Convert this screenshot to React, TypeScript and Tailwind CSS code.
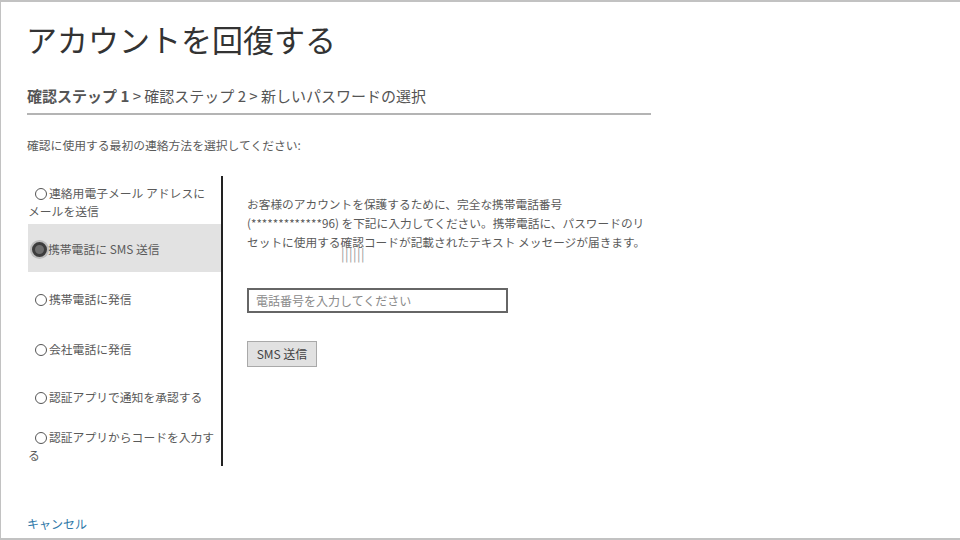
import React from "react";

type Option = {
  lines: string[];
  selected?: boolean;
  cls: string;
};

const options: Option[] = [
  { lines: ["連絡用電子メール アドレスに", "メールを送信"], cls: "pt-[8px] pb-[4px]" },
  { lines: ["携帯電話に SMS 送信"], selected: true, cls: "h-[48px] pt-[15px]" },
  { lines: ["携帯電話に発信"], cls: "pt-[18px] pb-[14px]" },
  { lines: ["会社電話に発信"], cls: "pt-[18px] pb-[12px]" },
  { lines: ["認証アプリで通知を承認する"], cls: "pt-[18px] pb-[4px]" },
  { lines: ["認証アプリからコードを入力す", "る"], cls: "pt-[18px] pb-[2px]" },
];

function Radio({ selected }: { selected?: boolean }) {
  if (selected) {
    return (
      <span className="mr-[1px] inline-block h-[15px] w-[15px] translate-y-[3px] rounded-full border-[3px] border-[#3d3d3d] bg-[#6e6e6e] shadow-[0_0_0_2px_#bdbdbd]" />
    );
  }
  return (
    <span className="ml-[7px] mr-[2px] inline-block h-[12px] w-[12px] translate-y-[2px] rounded-full border border-[#555] bg-white" />
  );
}

export default function App() {
  return (
    <div className="h-[540px] w-[960px] overflow-hidden border-t-2 border-b-2 border-l border-[#c2c2c2] bg-white font-['Noto_Sans_CJK_JP',sans-serif] text-[#5a5a5a]">
      <div className="pl-[26px] pt-[17px]">
        <h1 className="-ml-[1px] text-[31px] font-normal leading-[40px] text-[#333]">アカウントを回復する</h1>

        <div className="mt-[26px] text-[15px] leading-[22px] text-[#555]">
          <span className="font-bold">確認ステップ 1</span> &gt; 確認ステップ 2 &gt; 新しいパスワードの選択
        </div>
        <div className="mt-[6px] h-[2px] w-[624px] bg-[#b4b4b4]" />

        <p className="mt-[21px] text-[11.8px] leading-[18px]">確認に使用する最初の連絡方法を選択してください:</p>

        <div className="mt-[22px] flex">
          <div className="w-[196px] border-r-2 border-[#222] pl-[1px]">
            {options.map((o) => (
              <div
                key={o.lines[0]}
                className={`${o.cls} whitespace-nowrap text-[11.8px] leading-[18px] ${o.selected ? "bg-[#e2e2e2] pl-[4px]" : ""}`}
              >
                <Radio selected={o.selected} />
                {o.lines[0]}
                {o.lines[1] && <span className="block">{o.lines[1]}</span>}
              </div>
            ))}
          </div>

          <div className="pl-[24px] pt-[18px]">
            <p className="whitespace-nowrap text-[11.7px] leading-[19px]">
              <span className="block">お客様のアカウントを保護するために、完全な携帯電話番号</span>
              <span className="block">(*************96) を下記に入力してください。携帯電話に、パスワードのリ</span>
              <span className="block">セットに使用する確認コードが記載されたテキスト メッセージが届きます。</span>
            </p>
            <div className="-mt-[4px] ml-[94px] h-[14px] text-[13px] leading-[14px] tracking-[0.5px] text-[#999]">||||||</div>

            <input
              type="text"
              placeholder="電話番号を入力してください"
              className="mt-[27px] block h-[25px] w-[261px] border-2 border-[#666] px-[7px] text-[12px] text-[#333] outline-none placeholder:text-[#8a8a8a]"
            />

            <button className="mt-[28px] block h-[26px] w-[70px] whitespace-nowrap border border-[#a9a9a9] bg-[#e1e1e1] text-[12px] text-[#444]">
              SMS 送信
            </button>
          </div>
        </div>

        <a href="#" className="mt-[49px] block text-[12px] leading-[18px] text-[#2f78a8]">
          キャンセル
        </a>
      </div>
    </div>
  );
}
